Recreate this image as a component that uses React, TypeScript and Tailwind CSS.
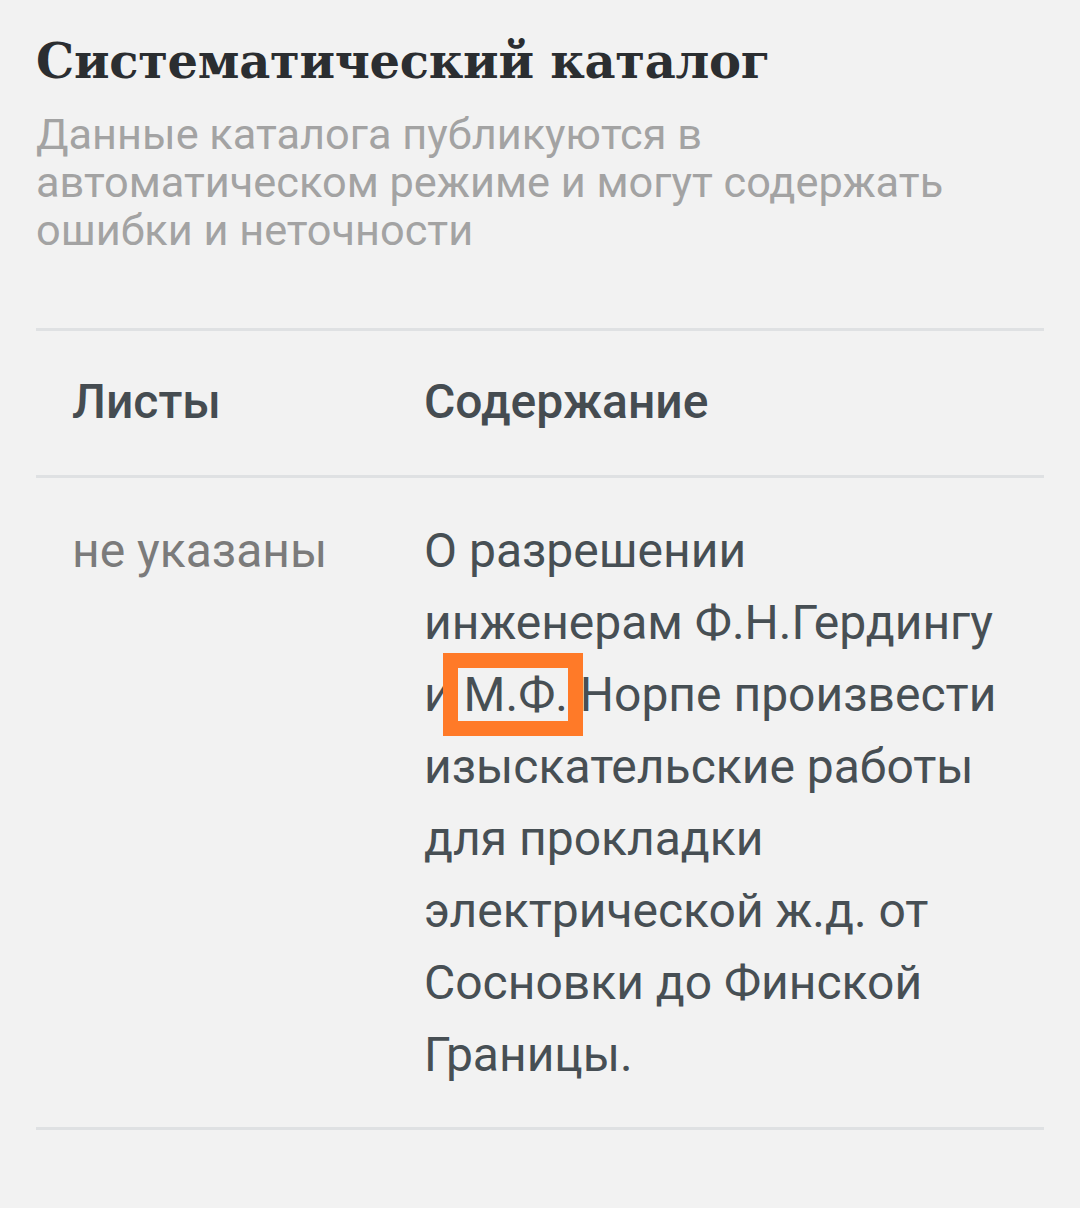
import React from "react";

export default function App() {
  return (
    <div className="min-h-[1208px] w-[1080px] bg-[#f2f2f2] px-9 pt-[25px] font-['Roboto',sans-serif]">
      <h1 className="font-['DejaVu_Serif',serif] text-[48px] font-bold leading-[72px] tracking-[-0.3px] text-[#2b2e31]">
        Систематический каталог
      </h1>
      <p className="mt-[14px] text-[43.3px] leading-[48px] text-[#a3a3a3]">
        Данные каталога публикуются в автоматическом режиме и могут содержать ошибки и неточности
      </p>
      <div className="mt-[73px] border-t-[3px] border-[#dfe1e3]">
        <div className="grid grid-cols-[352px_1fr] border-b-[3px] border-[#dfe1e3]">
          <div className="px-9 pt-[35px] pb-[37px] text-[48px] font-medium leading-[72px] text-[#454c51]">Листы</div>
          <div className="px-9 pt-[35px] pb-[37px] text-[48px] font-medium leading-[72px] text-[#454c51]">Содержание</div>
        </div>
        <div className="grid grid-cols-[352px_1fr] border-b-[3px] border-[#dfe1e3]">
          <div className="px-9 pt-[37px] pb-[36px] text-[48px] leading-[72px] text-[#7b7b7b]">не указаны</div>
          <div className="relative px-9 pt-[37px] pb-[36px] text-[48px] leading-[72px] text-[#474f54]">
            О разрешении инженерам Ф.Н.Гердингу и М.Ф. Норпе произвести изыскательские работы для прокладки электрической ж.д. от Сосновки до Финской Границы.
            <div className="absolute left-[55px] top-[175px] h-[83px] w-[140px] border-[15px] border-[#ff7a28]" />
          </div>
        </div>
      </div>
    </div>
  );
}
